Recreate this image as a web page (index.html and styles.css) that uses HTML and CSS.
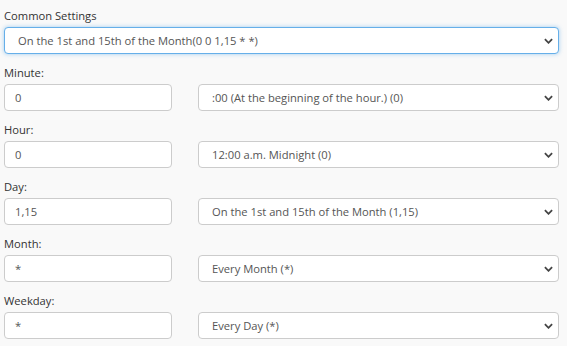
FILE: index.html
```html
<!DOCTYPE html>
<html lang="en">

<head>
    <meta charset="UTF-8">
    <title>Cron Settings</title>
    <link rel="stylesheet" href="styles.css">
</head>

<body>
    <div class="cron-form">
        <div class="field">
            <label for="common">Common Settings</label>
            <div class="select-wrap">
                <select id="common" class="focused">
                    <option>On the 1st and 15th of the Month(0 0 1,15 * *)</option>
                </select>
                <svg class="chevron" viewBox="0 0 10 6"><path d="M1 1l4 4 4-4" /></svg>
            </div>
        </div>

        <div class="field">
            <label for="minute">Minute:</label>
            <div class="pair">
                <input type="text" id="minute" value="0">
                <div class="select-wrap">
                    <select><option>:00 (At the beginning of the hour.) (0)</option></select>
                    <svg class="chevron" viewBox="0 0 10 6"><path d="M1 1l4 4 4-4" /></svg>
                </div>
            </div>
        </div>

        <div class="field">
            <label for="hour">Hour:</label>
            <div class="pair">
                <input type="text" id="hour" value="0">
                <div class="select-wrap">
                    <select><option>12:00 a.m. Midnight (0)</option></select>
                    <svg class="chevron" viewBox="0 0 10 6"><path d="M1 1l4 4 4-4" /></svg>
                </div>
            </div>
        </div>

        <div class="field">
            <label for="day">Day:</label>
            <div class="pair">
                <input type="text" id="day" value="1,15">
                <div class="select-wrap">
                    <select><option>On the 1st and 15th of the Month (1,15)</option></select>
                    <svg class="chevron" viewBox="0 0 10 6"><path d="M1 1l4 4 4-4" /></svg>
                </div>
            </div>
        </div>

        <div class="field">
            <label for="month">Month:</label>
            <div class="pair">
                <input type="text" id="month" value="*">
                <div class="select-wrap">
                    <select><option>Every Month (*)</option></select>
                    <svg class="chevron" viewBox="0 0 10 6"><path d="M1 1l4 4 4-4" /></svg>
                </div>
            </div>
        </div>

        <div class="field">
            <label for="weekday">Weekday:</label>
            <div class="pair">
                <input type="text" id="weekday" value="*">
                <div class="select-wrap">
                    <select><option>Every Day (*)</option></select>
                    <svg class="chevron" viewBox="0 0 10 6"><path d="M1 1l4 4 4-4" /></svg>
                </div>
            </div>
        </div>
    </div>
</body>

</html>
```

FILE: styles.css
```css
body {
    margin: 0;
    background-color: #f9f9f9;
    font-family: "Open Sans", sans-serif;
    font-size: 11.2px;
    color: #333;
}

.cron-form {
    display: flex;
    flex-direction: column;
    gap: 10px;
    padding: 7px 8px 0 4px;
}

label {
    display: block;
    line-height: 18px;
    margin-bottom: 2px;
}

.pair {
    display: grid;
    grid-template-columns: 168px 1fr;
    column-gap: 26px;
}

input,
select {
    box-sizing: border-box;
    width: 100%;
    height: 27px;
    margin: 0;
    background-color: #fff;
    color: #555;
    border: 1px solid #ccc;
    border-radius: 4px;
    font-family: "Open Sans", sans-serif;
    font-size: 11.2px;
    outline: none;
}

input {
    padding: 0 10px;
}

select {
    appearance: none;
    padding: 0 24px 0 13px;
}

select.focused {
    border-color: #66afe9;
    box-shadow: 0 0 4px rgba(102, 175, 233, 0.6);
}

.select-wrap {
    position: relative;
}

.chevron {
    position: absolute;
    right: 6px;
    top: 50%;
    width: 9px;
    height: 6px;
    margin-top: -3px;
    fill: none;
    stroke: #444;
    stroke-width: 2;
}
```
